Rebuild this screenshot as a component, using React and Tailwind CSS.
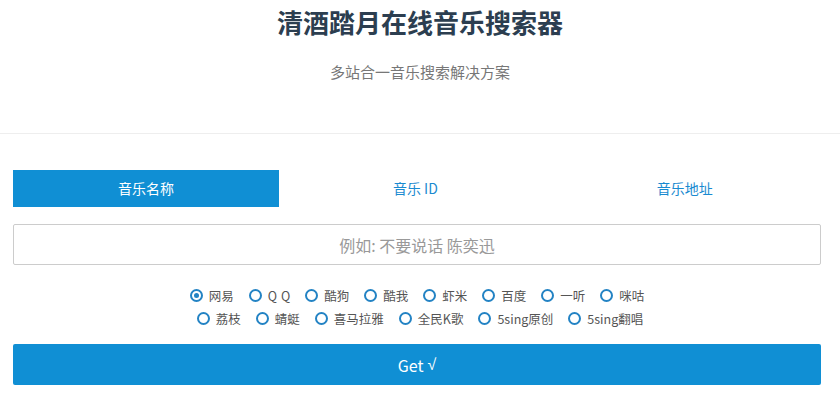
import React, { useState } from "react";

const sites = [
  ["网易", "QQ", "酷狗", "酷我", "虾米", "百度", "一听", "咪咕"],
  ["荔枝", "蜻蜓", "喜马拉雅", "全民K歌", "5sing原创", "5sing翻唱"],
];

function Radio({ label, checked, onClick }) {
  return (
    <label onClick={onClick} className="flex items-center cursor-pointer mr-[15px] last:mr-0">
      <span className="w-[13px] h-[13px] rounded-full border-2 border-[#2383c4] flex items-center justify-center box-border">
        {checked && <span className="w-[5px] h-[5px] rounded-full bg-[#2383c4]" />}
      </span>
      <span className="ml-[6px] text-[12.5px] text-[#555] leading-[23px]">
        {label === "QQ" ? <span className="tracking-[4px] mr-[-4px]">QQ</span> : label}
      </span>
    </label>
  );
}

export default function App() {
  const [tab, setTab] = useState(0);
  const [site, setSite] = useState("网易");
  const tabs = ["音乐名称", "音乐 ID", "音乐地址"];
  return (
    <div className="w-[840px] h-[399px] bg-white overflow-hidden" style={{ fontFamily: '"Noto Sans CJK SC", "Noto Sans", sans-serif' }}>
      <header className="h-[134px] border-b border-[#eee] flex flex-col items-center pt-[5px]">
        <h1 className="text-[26px] font-bold leading-[34px] text-[#2c3e50]">清酒踏月在线音乐搜索器</h1>
        <p className="mt-[23px] text-[15px] leading-[20px] text-[#777]">多站合一音乐搜索解决方案</p>
      </header>
      <main className="pl-[13px] pr-[19px] pt-[36px]">
        <div className="grid grid-cols-3 h-[37px]">
          {tabs.map((t, i) => (
            <button
              key={t}
              onClick={() => setTab(i)}
              className={
                "w-[266px] h-[37px] text-[14px] flex items-center justify-center " +
                (tab === i ? "bg-[#108fd4] text-white" : "text-[#1a8ad0]")
              }
            >
              {t}
            </button>
          ))}
        </div>
        <div className="mt-[17px] h-[41px] border border-[#ccc] rounded-[2px] flex items-center justify-center">
          <input
            className="w-full h-full text-center text-[16px] outline-none bg-transparent placeholder:text-[#999]"
            placeholder="例如: 不要说话 陈奕迅"
          />
        </div>
        <div className="mt-[19px] flex flex-col items-center">
          {sites.map((row, ri) => (
            <div key={ri} className={"flex items-center " + (ri === 1 ? "pl-[6px]" : "")}>
              {row.map((s) => (
                <Radio key={s} label={s} checked={site === s} onClick={() => setSite(s)} />
              ))}
            </div>
          ))}
        </div>
        <button className="mt-[14px] w-full h-[41px] rounded-[2px] bg-[#108fd4] text-white text-[16px] flex items-center justify-center">
          Get <span className="ml-[4px]" style={{ fontFamily: '"Liberation Sans", sans-serif' }}>√</span>
        </button>
      </main>
    </div>
  );
}
